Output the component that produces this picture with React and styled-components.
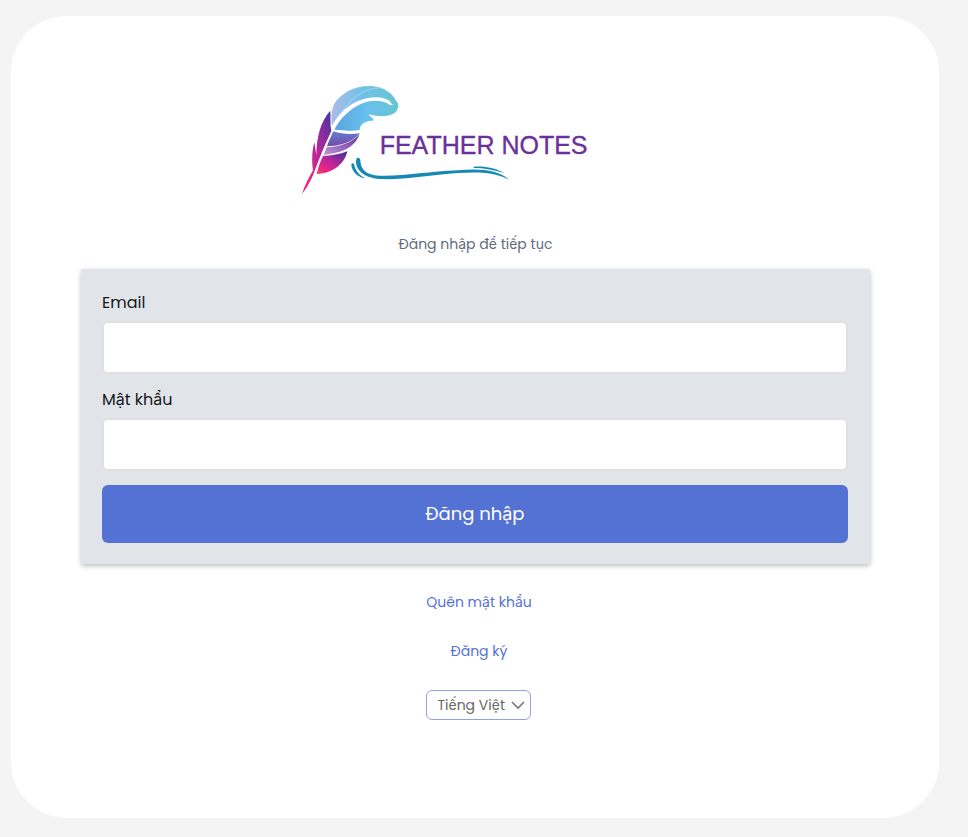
import React, { useState } from "react";
import styled, { createGlobalStyle } from "styled-components";

const GlobalStyle = createGlobalStyle`
  * {
    box-sizing: border-box;
  }

  body {
    margin: 0;
    background: #f4f4f4;
    font-family: Poppins, Inter, "Open Sans", sans-serif;
    font-size: 16px;
    color: #16181d;
  }
`;

const Page = styled.div`
  display: flex;
  min-height: 100vh;
  padding: 16px 29px 19px 11px;
`;

const Card = styled.main`
  display: flex;
  flex: 1;
  flex-direction: column;
  align-items: center;
  padding: 59px 69px 98px 70px;
  background: #ffffff;
  border-radius: 56px;
`;

const LogoTitle = styled.h1`
  margin: 0;
  font-weight: 400;
  line-height: 0;
`;

const Subtitle = styled.p`
  margin: 32px 0 13px;
  font-size: 14px;
  line-height: 24px;
  color: #5f6b80;
`;

const Form = styled.form`
  display: flex;
  flex-direction: column;
  width: 100%;
  padding: 22px 22px 21px 21px;
  background: #e1e5ea;
  border-radius: 2px;
  box-shadow: 0 2px 5px rgba(0, 0, 0, 0.25);
`;

const Field = styled.div`
  display: flex;
  flex-direction: column;
  margin-bottom: 14px;
`;

const Label = styled.label`
  margin-bottom: 6px;
  line-height: 24px;
`;

const Input = styled.input`
  width: 100%;
  height: 53px;
  padding: 0 14px;
  border: 2px solid #e0e0e0;
  border-radius: 6px;
  background: #ffffff;
  font: inherit;
  outline: none;

  &:focus {
    border-color: #5472d3;
  }
`;

const Button = styled.button`
  height: 58px;
  padding: 0 0 2px;
  border: none;
  border-radius: 6px;
  background: #5472d3;
  color: #ffffff;
  font-family: inherit;
  font-size: 18px;
  cursor: pointer;
`;

const Footer = styled.div`
  display: flex;
  flex-direction: column;
  align-items: center;
  gap: 25px;
  padding: 26px 0 0 7px;
`;

const Link = styled.a`
  font-size: 14px;
  line-height: 24px;
  color: #5472d3;
  text-decoration: none;
`;

const SelectBox = styled.div`
  display: grid;
  align-items: center;
  margin-top: 2px;

  & > * {
    grid-area: 1 / 1;
  }
`;

const Select = styled.select`
  appearance: none;
  width: 105px;
  height: 30px;
  padding: 0 24px 0 10px;
  border: 1px solid #8fa2e2;
  border-radius: 6px;
  background: #ffffff;
  color: #666666;
  font-family: inherit;
  font-size: 14px;
`;

const Arrow = styled.svg`
  justify-self: end;
  margin-right: 6px;
  pointer-events: none;
`;

const Logo = () => (
  <svg width="370" height="125" viewBox="0 0 1110 375" role="img" aria-label="Feather Notes">
    <defs>
      <linearGradient id="sky" x1="0" y1="0" x2="1" y2="0">
        <stop offset="0" stopColor="#abbce6" />
        <stop offset="0.45" stopColor="#71c1e8" />
        <stop offset="1" stopColor="#66c5d3" />
      </linearGradient>
      <linearGradient id="water" x1="0" y1="0" x2="1" y2="0">
        <stop offset="0" stopColor="#5ba4df" />
        <stop offset="0.5" stopColor="#67c0ee" />
        <stop offset="1" stopColor="#67c6d0" />
      </linearGradient>
      <linearGradient id="quill" x1="0.9" y1="0" x2="0.2" y2="0.9">
        <stop offset="0" stopColor="#4c35a0" />
        <stop offset="0.5" stopColor="#b3279a" />
        <stop offset="1" stopColor="#f02486" />
      </linearGradient>
      <linearGradient id="violet" x1="0.4" y1="0" x2="0.5" y2="1">
        <stop offset="0" stopColor="#6480cb" />
        <stop offset="1" stopColor="#7546aa" />
      </linearGradient>
      <linearGradient id="lilac" x1="0" y1="0.8" x2="1" y2="0">
        <stop offset="0" stopColor="#b58bd0" />
        <stop offset="1" stopColor="#65339e" />
      </linearGradient>
      <linearGradient id="berry" x1="0.9" y1="0" x2="0.1" y2="1">
        <stop offset="0" stopColor="#472fa0" />
        <stop offset="0.5" stopColor="#bb2697" />
        <stop offset="0.85" stopColor="#ef2682" />
        <stop offset="1" stopColor="#ff4052" />
      </linearGradient>
    </defs>
    <path
      fill="url(#sky)"
      d="M123 153C119 129 121 104 130 86C150 54 190 33 235 33C258 33 278 40 291 50C303 57 310 66 313 74C319 80 323 88 322 97C315 92 309 90 303 88C298 80 294 76 286 73C253 60 213 70 180 89C153 106 135 129 123 153Z"
    />
    <path
      fill="url(#water)"
      d="M130 164C144 137 166 112 196 94C230 74 262 74 287 84C295 90 303 92 309 88C314 90 318 93 322 97C318 101 320 106 314 112C294 128 256 125 232 117C238 127 247 128 248 137C230 136 206 143 206 165C181 170 155 165 130 164Z"
    />
    <path fill="none" stroke="#b9e2f3" strokeWidth="2" d="M157 105C181 68 225 37 270 39" />
    <path
      fill="url(#quill)"
      d="M118 107C88 139 77 186 76 240C74 227 72 213 70 202C63 226 62 260 66 286C52 310 41 332 33 357C52 334 65 306 73 282C88 244 102 207 121 168C117 149 119 128 118 107Z"
    />
    <path fill="url(#violet)" d="M127 169C154 178 181 179 207 175C182 203 145 213 108 214C113 198 120 184 127 169Z" />
    <path fill="url(#lilac)" d="M107 217C145 216 183 203 206 178C193 211 167 227 134 233C120 236 109 238 98 239Z" />
    <path fill="url(#berry)" d="M96 243C121 242 147 238 169 229C162 263 129 296 77 297C81 280 87 261 96 243Z" />
    <g fill="#1589b6">
      <path d="M196 252C199 245 208 248 208 256C209 283 225 301 265 302C327 305 417 289 500 286C566 280 622 284 654 314C612 292 563 290 501 294C417 300 336 315 266 312C216 309 190 281 196 252Z" />
      <path d="M181 269C183 262 190 264 190 271C195 291 207 302 223 310C198 306 182 288 181 269Z" />
      <path d="M548 275C585 273 615 280 639 294C612 285 580 279 548 279Z" />
    </g>
    <text
      x="266"
      y="238"
      fill="#6b3099"
      stroke="#6b3099"
      strokeWidth="1"
      fontFamily='"Liberation Sans", Arial, sans-serif'
      fontSize="75"
    >
      FEATHER NOTES
    </text>
  </svg>
);

const App = () => {
  const [email, setEmail] = useState("");
  const [password, setPassword] = useState("");

  return (
    <>
      <GlobalStyle />
      <Page>
        <Card>
          <LogoTitle>
            <Logo />
          </LogoTitle>
          <Subtitle>Đăng nhập để tiếp tục</Subtitle>
          <Form onSubmit={(e) => e.preventDefault()}>
            <Field>
              <Label htmlFor="email">Email</Label>
              <Input id="email" type="email" value={email} onChange={(e) => setEmail(e.target.value)} />
            </Field>
            <Field>
              <Label htmlFor="password">Mật khẩu</Label>
              <Input
                id="password"
                type="password"
                value={password}
                onChange={(e) => setPassword(e.target.value)}
              />
            </Field>
            <Button type="submit">Đăng nhập</Button>
          </Form>
          <Footer>
            <Link href="#forgot">Quên mật khẩu</Link>
            <Link href="#register">Đăng ký</Link>
            <SelectBox>
              <Select aria-label="Ngôn ngữ" defaultValue="vi">
                <option value="vi">Tiếng Việt</option>
                <option value="en">English</option>
              </Select>
              <Arrow width="14" height="14" viewBox="0 0 14 14" fill="none" stroke="#777777" strokeWidth="1.6">
                <path d="M1 4l6 6 6-6" />
              </Arrow>
            </SelectBox>
          </Footer>
        </Card>
      </Page>
    </>
  );
};

export default App;
